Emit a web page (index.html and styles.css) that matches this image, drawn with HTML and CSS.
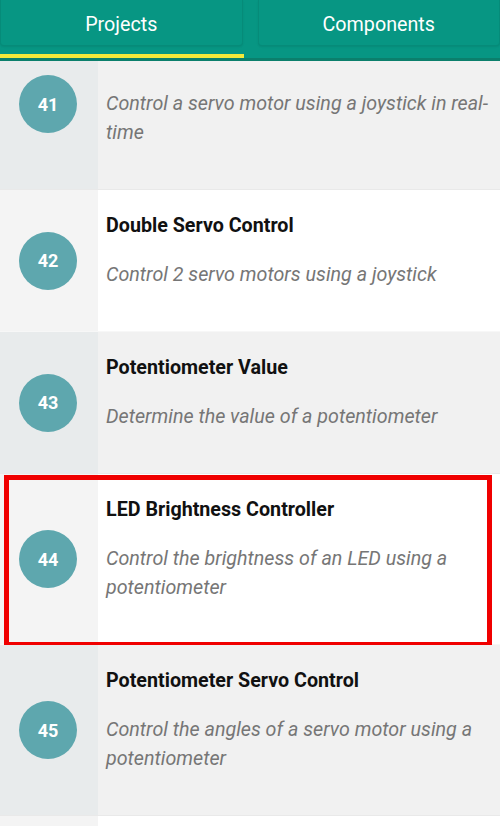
FILE: index.html
```html
<!DOCTYPE html>
<html lang="en">
<head>
  <meta charset="UTF-8">
  <title>Projects</title>
  <link rel="stylesheet" href="styles.css">
</head>
<body>
  <!-- tabs bar sits over the scrolled list -->
  <header class="tabs">
    <div class="tab-row">
      <div class="tab active">Projects</div>
      <div class="tab">Components</div>
    </div>
    <div class="tab-indicator"></div>
  </header>

  <ul class="project-list">
    <li class="project odd">
      <div class="num-col"><span class="num">41</span></div>
      <div class="info">
        <h3>Real-Time Servo Control</h3>
        <p>Control a servo motor using a joystick in real-time</p>
      </div>
    </li>
    <li class="project even">
      <div class="num-col"><span class="num">42</span></div>
      <div class="info">
        <h3>Double Servo Control</h3>
        <p>Control 2 servo motors using a joystick</p>
      </div>
    </li>
    <li class="project odd">
      <div class="num-col"><span class="num">43</span></div>
      <div class="info">
        <h3>Potentiometer Value</h3>
        <p>Determine the value of a potentiometer</p>
      </div>
    </li>
    <li class="project even selected">
      <div class="num-col"><span class="num">44</span></div>
      <div class="info">
        <h3>LED Brightness Controller</h3>
        <p>Control the brightness of an LED using a potentiometer</p>
      </div>
    </li>
    <li class="project odd">
      <div class="num-col"><span class="num">45</span></div>
      <div class="info">
        <h3>Potentiometer Servo Control</h3>
        <p>Control the angles of a servo motor using a potentiometer</p>
      </div>
    </li>
    <!-- next row, only its top edge is on screen -->
    <li class="project even placeholder">
      <div class="num-col"></div>
      <div class="info"></div>
    </li>
  </ul>
</body>
</html>
```

FILE: styles.css
```css
/* page base */
body {
  margin: 0;
  font-family: Roboto, "Liberation Sans", sans-serif;
  background: #f1f1f1;
  overflow: hidden;
}

/* top tabs bar */
.tabs {
  position: fixed;
  top: 0;
  left: 0;
  right: 0;
  z-index: 2;
  height: 58px;
  background: #079683;
  border-bottom: 3px solid #0b7f6c;
}

.tab-row {
  display: flex;
  gap: 15px;
  height: 46px;
}

.tab {
  flex: 1;
  display: flex;
  align-items: center;
  justify-content: center;
  color: #fff;
  font-size: 19.7px;
  border: 1px solid rgba(0, 0, 0, 0.07);
  border-top: none;
  border-radius: 0 0 4px 4px;
  box-shadow: 0 1px 2px rgba(0, 0, 0, 0.08);
  padding-top: 4px;
}

/* yellow line under active tab */
.tab-indicator {
  width: 244px;
  height: 4px;
  margin-top: 8px;
  background: #f4e93b;
}

/* list */
.project-list {
  list-style: none;
  margin: 19px 0 0;
  padding: 0;
}

.project {
  display: flex;
  position: relative;
  border-bottom: 1px solid rgba(0, 0, 0, 0.03);
}

.project.odd {
  background: #f1f1f1;
}

.project.even {
  background: #fff;
}

.placeholder {
  height: 60px;
}

.num-col {
  width: 98px;
  flex-shrink: 0;
  display: flex;
  align-items: center;
  justify-content: center;
  padding-right: 2px;
  box-sizing: border-box;
}

.odd .num-col {
  background: #e8ebec;
}

.even .num-col {
  background: #f4f4f4;
}

.num {
  width: 58px;
  height: 58px;
  border-radius: 50%;
  background: #5ea7ae;
  color: #fff;
  font-weight: bold;
  font-size: 18px;
  display: flex;
  align-items: center;
  justify-content: center;
}

.info {
  flex: 1;
  padding: 22px 10px 42px 8px;
}

.info h3 {
  margin: 0;
  font-size: 19.7px;
  line-height: 28px;
  font-weight: bold;
  color: #111;
}

.info p {
  margin: 20px 0 0;
  font-size: 19.7px;
  line-height: 29px;
  font-style: italic;
  color: #767676;
}

/* red highlight frame around the chosen project */
.selected::after {
  content: "";
  position: absolute;
  left: 4px;
  right: 8px;
  top: 1px;
  bottom: -3px;
  border: 5px solid #f00000;
  pointer-events: none;
}
```
